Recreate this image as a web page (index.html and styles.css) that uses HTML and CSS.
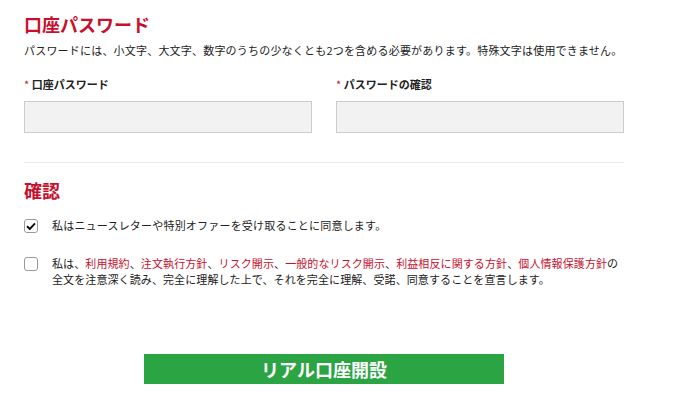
FILE: index.html
```html
<!DOCTYPE html>
<html lang="ja">
<head>
    <meta charset="UTF-8">
    <meta name="viewport" content="width=device-width, initial-scale=1.0">
    <title>口座パスワード</title>
    <link rel="stylesheet" href="styles.css">
</head>
<body>
    <div class="container">
        <h1>口座パスワード</h1>
        <p class="hint">パスワードには、小文字、大文字、数字のうちの少なくとも2つを含める必要があります。特殊文字は使用できません。</p>

        <div class="fields">
            <div class="field">
                <label for="pass"><span class="req">*</span> 口座パスワード</label>
                <input type="password" id="pass" />
            </div>
            <div class="field">
                <label for="pass2"><span class="req">*</span> パスワードの確認</label>
                <input type="password" id="pass2" />
            </div>
        </div>

        <hr class="divider">

        <h2>確認</h2>
        <div class="check-row first">
            <span class="box checked">
                <svg width="10" height="8" viewBox="0 0 10 8"><path d="M1 4.2 L3.8 7 L9 1.4" fill="none" stroke="#111" stroke-width="2"/></svg>
            </span>
            <p>私はニュースレターや特別オファーを受け取ることに同意します。</p>
        </div>
        <div class="check-row second">
            <span class="box"></span>
            <p>私は、<a href="#">利用規約</a>、<a href="#">注文執行方針</a>、<a href="#">リスク開示</a>、<a href="#">一般的なリスク開示</a>、<a href="#">利益相反に関する方針</a>、<a href="#">個人情報保護方針</a>の<br>全文を注意深く読み、完全に理解した上で、それを完全に理解、受諾、同意することを宣言します。</p>
        </div>

        <button type="submit">リアル口座開設</button>
    </div>
</body>
</html>
```

FILE: styles.css
```css
* { margin: 0; padding: 0; box-sizing: border-box; }
body { font-family: "Noto Sans CJK JP", "Noto Sans", sans-serif; background-color: #fff; color: #222; }
.container { width: 600px; margin-left: 24px; display: flex; flex-direction: column; }
h1 { font-size: 18px; line-height: 24px; margin-top: 12px; color: #c8102e; font-weight: bold; }
.hint { font-size: 11px; line-height: 17px; margin-top: 6px; letter-spacing: 0.2px; white-space: nowrap; }
.fields { display: flex; gap: 24px; margin-top: 17px; }
.field { flex: 1; display: flex; flex-direction: column; }
label { font-size: 11px; line-height: 17px; font-weight: bold; margin-bottom: 8px; }
.req { color: #c8102e; font-weight: normal; }
input { width: 100%; height: 32px; background-color: #f2f2f2; border: 1px solid #ccc; font-size: 12px; padding: 0 8px; }
.divider { border: none; border-top: 1px solid #ebebeb; margin-top: 29px; }
h2 { font-size: 18px; line-height: 24px; margin-top: 15px; color: #c8102e; font-weight: bold; }
.check-row { display: flex; gap: 14px; margin-top: 15px; font-size: 11px; line-height: 17px; }
.check-row.first p { letter-spacing: 0.2px; }
.check-row.second { margin-top: 21px; line-height: 16px; }
.check-row.second p { letter-spacing: 0.1px; }
.box { flex: none; width: 14px; height: 14px; border: 1px solid #999; border-radius: 3px; background: #fff; margin-top: 2px; display: flex; align-items: center; justify-content: center; }
a { color: #c8102e; text-decoration: none; }
button { align-self: center; width: 360px; height: 30px; margin-top: 67px; background-color: #2ba443; color: #fff; border: none; font-family: inherit; font-size: 18px; font-weight: bold; line-height: 30px; cursor: pointer; }
```
